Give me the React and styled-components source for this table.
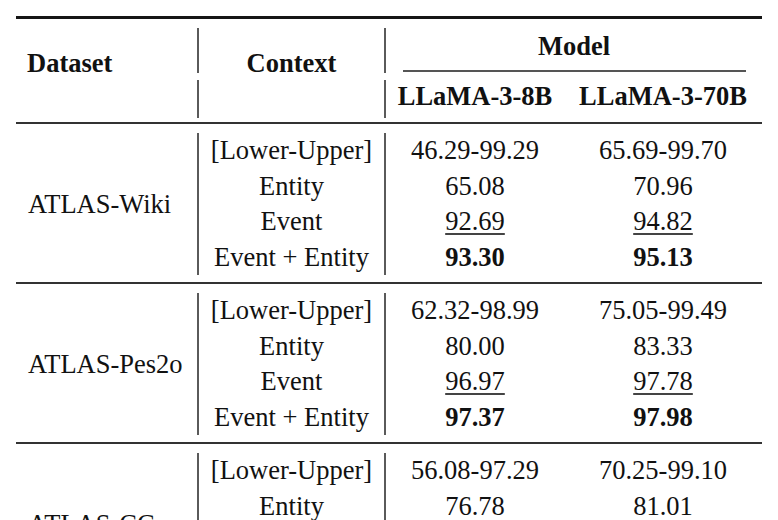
import React from 'react';
import styled, { createGlobalStyle } from 'styled-components';

const GlobalStyle = createGlobalStyle`
  html, body {
    margin: 0;
    background: #ffffff;
    overflow: hidden;
  }
  body {
    font-family: "Liberation Serif", "Times New Roman", serif;
    color: #111111;
  }
`;

const COLUMNS = '181px 2px 185px 2px 178px 198px';

const Wrapper = styled.div`
  width: 746px;
  padding: 16px 0 0 16px;
  font-size: 26.5px;
`;

const Rule = styled.div`
  height: ${p => p.$weight || 2}px;
  background: ${p => (p.$weight === 3 ? '#151515' : '#333333')};
  margin-top: ${p => p.$gap || 0}px;
`;

const HeaderGrid = styled.div`
  display: grid;
  grid-template-columns: ${COLUMNS};
  grid-template-rows: 45px 7px 38px;
  margin-top: 9px;
  font-weight: bold;
`;

const SectionGrid = styled.div`
  display: grid;
  grid-template-columns: ${COLUMNS};
  grid-template-rows: repeat(4, 35.5px);
  padding: 9px 0 7px;
`;

const VLine = styled.div`
  grid-column: ${p => p.$col};
  grid-row: ${p => p.$row};
  background: #5a5a5a;
`;

const HeadLabel = styled.div`
  grid-column: ${p => p.$col};
  grid-row: 1 / 4;
  align-self: start;
  padding: 17px 0 0 ${p => p.$indent || 0}px;
  line-height: 36px;
  text-align: ${p => (p.$indent ? 'left' : 'center')};
`;

const ModelCell = styled.div`
  grid-column: 5 / 7;
  grid-row: 1;
  display: flex;
  flex-direction: column;
`;

const ModelLabel = styled.div`
  line-height: 36px;
  text-align: center;
`;

const CMidRule = styled.div`
  height: 2px;
  margin: 6px 16px 0 17px;
  background: #555555;
`;

const ModelName = styled.div`
  grid-column: ${p => p.$col};
  grid-row: 3;
  line-height: 32px;
  text-align: center;
  white-space: nowrap;
`;

const DatasetName = styled.div`
  grid-column: 1;
  grid-row: 1 / 5;
  align-self: center;
  padding-left: 12px;
  line-height: 36px;
  white-space: nowrap;
`;

const Cell = styled.div`
  grid-column: ${p => p.$col};
  grid-row: ${p => p.$row};
  line-height: 35.5px;
  text-align: center;
  white-space: nowrap;
  font-weight: ${p => (p.$best ? 'bold' : 'normal')};
`;

const Second = styled.span`
  text-decoration: underline;
  text-decoration-thickness: 1.5px;
  text-underline-offset: 3px;
  text-decoration-color: #444444;
`;

const contexts = ['[Lower-Upper]', 'Entity', 'Event', 'Event + Entity'];

const sections = [
  {
    name: 'ATLAS-Wiki',
    values: [
      ['46.29-99.29', '65.69-99.70'],
      ['65.08', '70.96'],
      ['92.69', '94.82'],
      ['93.30', '95.13'],
    ],
  },
  {
    name: 'ATLAS-Pes2o',
    values: [
      ['62.32-98.99', '75.05-99.49'],
      ['80.00', '83.33'],
      ['96.97', '97.78'],
      ['97.37', '97.98'],
    ],
  },
  {
    name: 'ATLAS-CC',
    values: [
      ['56.08-97.29', '70.25-99.10'],
      ['76.78', '81.01'],
      ['', ''],
      ['', ''],
    ],
  },
];

const ValueCell = ({ value, col, row }) => {
  if (row === 3) {
    return (
      <Cell $col={col} $row={row}>
        <Second>{value}</Second>
      </Cell>
    );
  }
  return (
    <Cell $col={col} $row={row} $best={row === 4}>
      {value}
    </Cell>
  );
};

const Section = ({ section }) => (
  <SectionGrid>
    <DatasetName>{section.name}</DatasetName>
    <VLine $col={2} $row="1 / 5" />
    <VLine $col={4} $row="1 / 5" />
    {contexts.map((ctx, i) => (
      <Cell key={ctx} $col={3} $row={i + 1}>
        {ctx}
      </Cell>
    ))}
    {section.values.map((pair, i) => (
      <React.Fragment key={i}>
        <ValueCell value={pair[0]} col={5} row={i + 1} />
        <ValueCell value={pair[1]} col={6} row={i + 1} />
      </React.Fragment>
    ))}
  </SectionGrid>
);

const App = () => {
  return (
    <>
      <GlobalStyle />
      <Wrapper>
        <Rule $weight={3} />
        <HeaderGrid>
          <HeadLabel $col={1} $indent={11}>Dataset</HeadLabel>
          <VLine $col={2} $row={1} />
          <VLine $col={2} $row={3} />
          <HeadLabel $col={3}>Context</HeadLabel>
          <VLine $col={4} $row={1} />
          <VLine $col={4} $row={3} />
          <ModelCell>
            <ModelLabel>Model</ModelLabel>
            <CMidRule />
          </ModelCell>
          <ModelName $col={5}>LLaMA-3-8B</ModelName>
          <ModelName $col={6}>LLaMA-3-70B</ModelName>
        </HeaderGrid>
        <Rule $gap={4} />
        {sections.map(section => (
          <React.Fragment key={section.name}>
            <Section section={section} />
            <Rule />
          </React.Fragment>
        ))}
      </Wrapper>
    </>
  );
};

export default App;
